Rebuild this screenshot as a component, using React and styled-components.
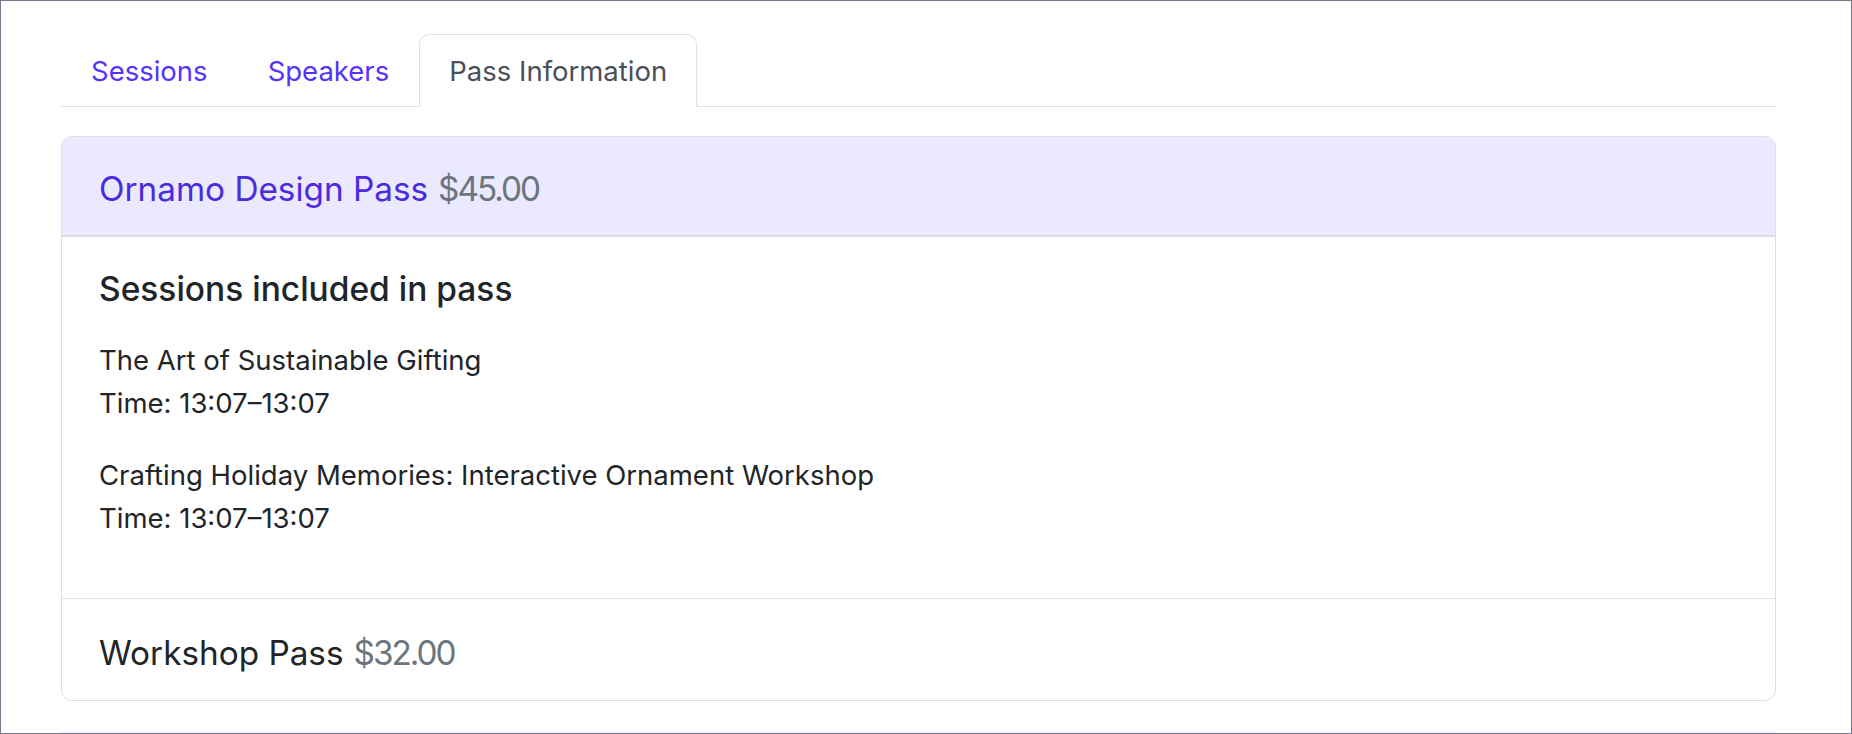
import React from 'react';
import styled, { createGlobalStyle } from 'styled-components';

const GlobalStyle = createGlobalStyle`
  html, body {
    margin: 0;
    padding: 0;
    background: #ffffff;
  }
  body {
    font-family: Inter, "Noto Sans", "Liberation Sans", sans-serif;
    color: #212529;
  }
`;

const passes = [
  {
    name: 'Ornamo Design Pass',
    price: '$45.00',
    open: true,
    sessions: [
      { title: 'The Art of Sustainable Gifting', time: '13:07–13:07' },
      { title: 'Crafting Holiday Memories: Interactive Ornament Workshop', time: '13:07–13:07' },
    ],
  },
  { name: 'Workshop Pass', price: '$32.00', open: false, sessions: [] },
];

const tabs = ['Sessions', 'Speakers', 'Pass Information'];

const App = () => {
  return (
    <Frame>
      <GlobalStyle />
      <TabBar>
        {tabs.map((tab, index) => (
          <Tab key={index} active={tab === 'Pass Information'}>{tab}</Tab>
        ))}
      </TabBar>

      <Card>
        {passes.map((pass, index) => (
          <PassItem key={index} last={index === passes.length - 1}>
            <PassHeader open={pass.open}>
              <PassName open={pass.open}>{pass.name}</PassName>
              <Price>{pass.price}</Price>
            </PassHeader>
            {pass.open && (
              <PassBody>
                <BodyTitle>Sessions included in pass</BodyTitle>
                {pass.sessions.map((session, i) => (
                  <SessionText key={i}>
                    {session.title}
                    <br />
                    Time: {session.time}
                  </SessionText>
                ))}
              </PassBody>
            )}
          </PassItem>
        ))}
      </Card>
      <NextBlock />
    </Frame>
  );
};

export default App;

const Frame = styled.div`
  box-sizing: border-box;
  width: 1852px;
  height: 734px;
  border: 1px solid #7a788d;
  padding: 33px 75px 0 60px;
  overflow: hidden;
`;

const TabBar = styled.div`
  display: flex;
  border-bottom: 1px solid #dee2e6;
  height: 72px;
`;

const Tab = styled.div`
  box-sizing: border-box;
  height: 73px;
  margin-bottom: -1px;
  padding: 0 29px;
  display: flex;
  align-items: center;
  font-size: 27.5px;
  color: ${({active}) => active ? '#495057' : '#5533ff'};
  background: ${({active}) => active ? '#ffffff' : 'transparent'};
  border: 1px solid ${({active}) => active ? '#dee2e6' : 'transparent'};
  border-bottom-color: ${({active}) => active ? '#ffffff' : 'transparent'};
  border-radius: 10px 10px 0 0;
  cursor: pointer;
`;

const Card = styled.div`
  margin-top: 29px;
  border: 1px solid #dedde6;
  border-radius: 11px;
  overflow: hidden;
  background: #ffffff;
`;

const PassItem = styled.div`
  border-bottom: ${({last}) => last ? 'none' : '1px solid #dee2e6'};
`;

const PassHeader = styled.div`
  box-sizing: border-box;
  height: ${({open}) => open ? '100px' : '101px'};
  display: flex;
  align-items: center;
  gap: 10px;
  padding: 6px 37px 0;
  background: ${({open}) => open ? '#ebe9fd' : '#ffffff'};
  border-bottom: ${({open}) => open ? '2px solid #dcdbe8' : 'none'};
  font-size: 33.3px;
`;

const PassName = styled.span`
  color: ${({open}) => open ? '#4a2be0' : '#212529'};
`;

const Price = styled.span`
  color: #6c757d;
  letter-spacing: -2px;
`;

const PassBody = styled.div`
  padding: 31px 37px 29px;
`;

const BodyTitle = styled.div`
  font-size: 33.5px;
  font-weight: 500;
  line-height: 43px;
  margin-bottom: 28px;
  color: #212529;
`;

const SessionText = styled.p`
  margin: 0 0 29px;
  font-size: 27.5px;
  line-height: 43px;
  color: #212529;
`;

const NextBlock = styled.div`
  margin-top: 30px;
  height: 10px;
  background: #f7f7f9;
`;
